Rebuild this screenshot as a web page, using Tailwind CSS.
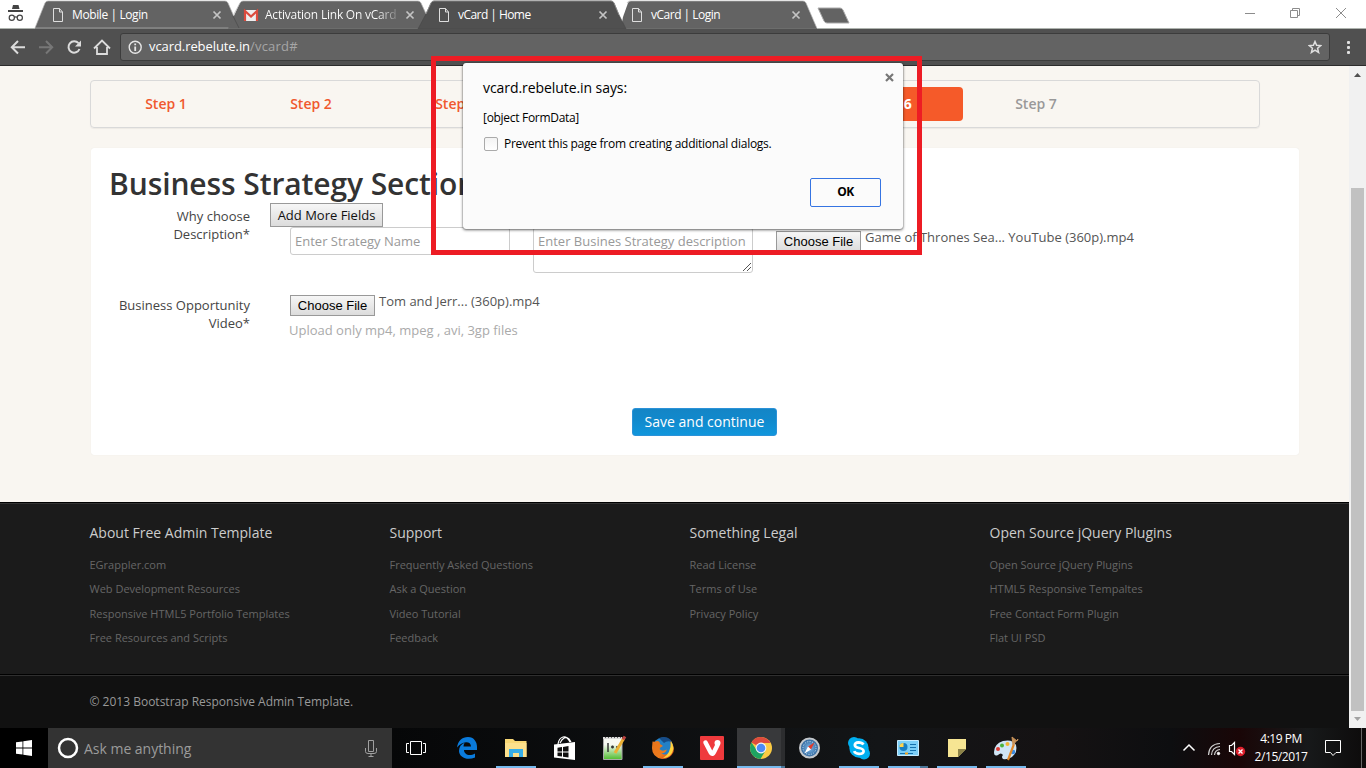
<!DOCTYPE html>
<html lang="en">
<head>
<meta charset="utf-8">
<title>vCard | Home</title>
<script src="https://cdn.jsdelivr.net/npm/@tailwindcss/browser@4"></script>
</head>
<body class="w-[1366px] h-[768px] overflow-hidden font-['Open_Sans',sans-serif] whitespace-nowrap">
<div class="relative flex flex-col w-[1366px] h-[768px] overflow-hidden">

  <!-- Tab strip -->
  <div class="relative h-[29px] shrink-0 bg-white">
    <svg class="absolute inset-0" width="1366" height="29" viewBox="0 0 1366 29">
      <path d="M0 28.5H1366" stroke="#aeb3ae"/>
      <path d="M35 28L45 3Q46 1 48 1H225Q227 1 228 3L239 28Z" fill="#636363" stroke="#b5b5b5" stroke-width=".7"/>
      <path d="M621 28.5L623 17L628 3Q629 1 631 1H803Q805 1 806 3L817 28.5Z" fill="#636363"/>
      <path d="M627 3Q628 1 630 1H803Q805 1 806 3L817 28.5" fill="none" stroke="#b5b5b5" stroke-width=".7"/>
      <path d="M228 28.5L240 3Q241 1 243 1H418Q420 1 421 3L433 28.5Z" fill="#636363"/>
      <path d="M233 16L239 28" stroke="#515151"/>
      <path d="M234 14L240 3Q241 1 243 1H418Q420 1 421 3L426 14" fill="none" stroke="#b5b5b5" stroke-width=".7"/>
      <path d="M35 28.5H817V29H35Z" fill="#515151"/>
      <path d="M418 29L426 14L431 3Q432 1 434 1H611Q613 1 614 3L619 15L626 29Z" fill="#505050" stroke="#494949" stroke-width=".7"/>
      <path d="M426 14L431 3Q432 1 434 1H611Q613 1 614 3L619 15" fill="none" stroke="#999" stroke-width=".7"/>
      <path d="M818 8H840Q842 8 843 10L849 23H827Q825 23 824 21Z" fill="#636363" stroke="#aaa"/>
      <g fill="#444"><path d="M12 9L13 5H18.500L19.500 9Z"/><path d="M8 10H23V12H8Z"/></g>
      <g fill="none" stroke="#444" stroke-width="1.200"><circle cx="11.800" cy="17.800" r="2.600"/><circle cx="19.800" cy="17.800" r="2.600"/><path d="M14.400 17.400Q15.800 16.300 17.200 17.400"/></g>
      <g fill="none" stroke="#dedede"><path id="doc" d="M53.500 8.500H59.500L62.500 12V21.500H53.500ZM59.500 8.500V12H62.500"/><use href="#doc" x="386"/><use href="#doc" x="579"/></g>
      <g fill="none" stroke="#c4c4c4" stroke-width="1.700"><path id="cx" d="M213.500 11.500L220.500 18.500M220.500 11.500L213.500 18.500"/><use href="#cx" x="193"/><use href="#cx" x="386"/><use href="#cx" x="579"/></g>
      <path d="M244 10H258V21H244Z" fill="#eee"/><path d="M245 21V11L251 16.500L257 11V21" fill="none" stroke="#dc4b3e" stroke-width="2.200"/>
      <g fill="none" stroke="#8c8c8c"><path d="M1245 13.500H1255M1290.500 10.500H1297.500V17.500H1290.500ZM1292.500 10V8.500H1299.500V15.500H1298M1336 8L1346 18M1346 8L1336 18"/></g>
    </svg>
    <div class="relative flex pl-[72px] text-[12px] leading-[29px] text-white">
      <div class="w-[193px] tracking-[-0.4px]">Mobile | Login</div>
      <div class="w-[193px]"><div class="w-[132px] overflow-hidden bg-gradient-to-r from-white from-85% to-white/20 bg-clip-text text-transparent tracking-[-0.22px]">Activation Link On vCard</div></div>
      <div class="w-[193px] tracking-[-0.55px]">vCard | Home</div>
      <div class="tracking-[-0.5px]">vCard | Login</div>
    </div>
  </div>

  <!-- Toolbar -->
  <div class="flex h-[37px] shrink-0 items-start bg-[#505050] border-b border-[#2c2c2c]">
    <svg width="120" height="36" viewBox="0 29 120 36" fill="none" stroke="#dcdcdc" stroke-width="2">
      <path d="M25 47.300H12M18 41L11.800 47.300L18 53.500"/>
      <path d="M39 47.300H52M46 41L52.200 47.300L46 53.500" stroke="#777"/>
      <path d="M78.500 43.200A5.700 5.700 0 1 0 79.500 49"/><path d="M81 40.500V46.500H75Z" fill="#dcdcdc" stroke="none"/>
      <path d="M94 48.500L102 40.500L110 48.500M97 47V54H107V47" stroke-width="1.800"/>
    </svg>
    <div class="mt-1 flex h-7 w-[1210px] items-center rounded-[3px] border border-[#3c3c3c] bg-[#636363] pl-[7px] pr-[7px]">
      <svg width="15" height="15" viewBox="0 0 15 15" fill="none" stroke="#e6e6e6" stroke-width="1.400"><circle cx="7.200" cy="7.200" r="6"/><path d="M7.200 6.500V11M7.200 3.500V5.200" stroke-width="1.800"/></svg>
      <div class="ml-[6px] grow text-[13px] tracking-[-0.08px] text-white">vcard.rebelute.in<span class="text-[#a6a6a6] tracking-[0.2px]">/vcard#</span></div>
      <svg width="14" height="14" viewBox="0 0 14 14" fill="none" stroke="#e0e0e0" stroke-width="1.500"><path d="M7 1.500L8.600 5.300L12.800 5.600L9.600 8.300L10.600 12.500L7 10.200L3.400 12.500L4.400 8.300L1.200 5.600L5.400 5.300Z"/></svg>
    </div>
    <svg class="ml-[16px] mt-3" width="5" height="14" fill="#e0e0e0"><rect x="1" y="0" width="3" height="3" rx="1"/><rect x="1" y="5" width="3" height="3" rx="1"/><rect x="1" y="10" width="3" height="3" rx="1"/></svg>
  </div>

  <!-- Page -->
  <div class="flex h-[662px] shrink-0">
    <div class="flex w-[1349px] flex-col bg-[#f9f6f1]">
      <div class="ml-[90px] mt-[14px] flex h-[48px] w-[1170px] items-center rounded-[4px] border border-[#d9d9d9] pl-[2px] text-center text-[14px] font-semibold leading-[34px] text-[#f0592e] shadow-[0_1px_1px_#0000000d]">
        <div class="w-[145px] pl-px">Step 1</div><div class="w-[145px] pl-px">Step 2</div><div class="w-[145px] pl-px">Step 3</div><div class="w-[145px]"></div><div class="w-[145px]"></div>
        <div class="w-[145px] rounded-[4px] bg-[#f55a29] font-bold text-white">Step 6</div>
        <div class="w-[145px] pl-px text-[#999]">Step 7</div>
      </div>

      <div class="ml-[91px] mt-[20px] flex h-[307px] w-[1208px] flex-col rounded-[3px] bg-white text-[13px] leading-[18px] text-[#555] shadow-[0_0_1px_#0000001a]">
        <h2 class="ml-[18px] mt-[17px] h-[38px] text-[30px] font-semibold leading-[38px] tracking-[-0.1px] text-[#333]">Business Strategy Section</h2>
        <div class="flex h-[91px]">
          <div class="w-[159px] pt-[4px] text-right text-[#444]">Why choose<br>Description*</div>
          <div class="ml-[20px] flex flex-col items-start">
            <div class="flex h-6 w-[113px] items-center justify-center border border-[#999] bg-gradient-to-b from-[#f6f6f6] to-[#dcdcdc] text-[#111]">Add More Fields</div>
            <div class="ml-[20px] flex items-start">
              <div class="h-7 w-[220px] rounded-[3px] border border-[#ccc] px-[4px] leading-[26px] text-[#999]">Enter Strategy Name</div>
              <div class="relative ml-[23px] h-[46px] w-[220px] rounded-[3px] border border-[#ccc] px-[4px] leading-[26px] text-[#999]">Enter Busines Strategy description
                <svg class="absolute bottom-0 right-0" width="10" height="10" stroke="#555" fill="none"><path d="M1 9L9 1M5 9L9 5"/></svg></div>
              <div class="ml-[23px] mt-[4px] flex h-[21px] w-[85px] items-center justify-center border border-[#999] bg-gradient-to-b from-[#f6f6f6] to-[#dcdcdc] font-['Liberation_Sans',sans-serif] text-[13px] text-black">Choose File</div>
              <div class="ml-[4px] mt-[1px]">Game of Thrones Sea... YouTube (360p).mp4</div>
            </div>
          </div>
        </div>
        <div class="flex h-[114px] pt-[1px]">
          <div class="w-[159px] pt-[1px] text-right text-[#444]">Business Opportunity<br>Video*</div>
          <div class="ml-[40px]">
            <div class="flex items-start">
              <div class="flex h-[21px] w-[85px] items-center justify-center border border-[#999] bg-gradient-to-b from-[#f6f6f6] to-[#dcdcdc] font-['Liberation_Sans',sans-serif] text-[13px] text-black">Choose File</div>
              <div class="ml-[4px] -mt-[3px]">Tom and Jerr... (360p).mp4</div>
            </div>
            <div class="-ml-px mt-[5px] text-[#aaa]">Upload only mp4, mpeg , avi, 3gp files</div>
          </div>
        </div>
        <div class="ml-[541px] flex h-7 w-[145px] items-center justify-center rounded-[3px] border border-[#2b92d8] bg-gradient-to-b from-[#1485c6] via-[#1189cc] via-40% to-[#1096dc] text-[14px] text-white">Save and continue</div>
      </div>

      <!-- Footer -->
      <div class="mt-[47px] flex h-[172px] shrink-0 border-t border-black bg-[#1b1b1b] pl-[89.5px] pt-[20px] text-[11px] leading-[24.4px] text-[#666] shadow-[inset_0_1px_0_#333]">
        <div class="w-[300px]"><div class="mb-[10px] text-[14px] leading-5 text-[#ccc]">About Free Admin Template</div>EGrappler.com<br>Web Development Resources<br>Responsive HTML5 Portfolio Templates<br>Free Resources and Scripts</div>
        <div class="w-[300px]"><div class="mb-[10px] text-[14px] leading-5 text-[#ccc]">Support</div>Frequently Asked Questions<br>Ask a Question<br>Video Tutorial<br>Feedback</div>
        <div class="w-[300px]"><div class="mb-[10px] text-[14px] leading-5 text-[#ccc]">Something Legal</div>Read License<br>Terms of Use<br>Privacy Policy</div>
        <div><div class="mb-[10px] text-[14px] leading-5 text-[#ccc]">Open Source jQuery Plugins</div>Open Source jQuery Plugins<br>HTML5 Responsive Tempaltes<br>Free Contact Form Plugin<br>Flat UI PSD</div>
      </div>
      <div class="h-[54px] shrink-0 border-t border-black bg-[#111] pl-[89.5px] pt-[17px] text-[12px] leading-[20px] text-[#999] shadow-[inset_0_1px_0_#2f2f2f]">© 2013 Bootstrap Responsive Admin Template.</div>
    </div>
    <!-- Scrollbar -->
    <div class="flex w-[17px] flex-col items-center bg-[#f1f1f1]">
      <svg width="17" height="122"><path d="M5 11L8.500 7L12 11Z" fill="#505050"/></svg>
      <div class="h-[523px] w-[13px] bg-[#c1c1c1]"></div>
      <svg width="17" height="17"><path d="M5 6L8.500 10L12 6Z" fill="#a3a3a3"/></svg>
    </div>
  </div>

  <!-- Taskbar -->
  <div class="flex h-10 shrink-0 bg-[#060708] font-['Open_Sans',sans-serif]">
    <div class="flex w-12 items-center justify-center bg-black"><svg width="16" height="16" fill="#fff"><path d="M0 2.300L6.500 1.400V7.600H0ZM7.300 1.300L16 0V7.600H7.300ZM0 8.400H6.500V14.600L0 13.700ZM7.300 8.400H16V16L7.300 14.700Z"/></svg></div>
    <div class="flex w-[344px] items-center bg-[#333] pl-[9px]">
      <svg width="22" height="22" fill="none"><circle cx="11" cy="11" r="9" stroke="#fff" stroke-width="2.500"/></svg>
      <div class="ml-[5px] w-[281px] text-[14px] tracking-[-0.02px] text-[#9b9b9b]">Ask me anything</div>
      <svg width="12" height="17" fill="none" stroke="#a0a0a0"><path d="M3.500 .5H8.500V11.500H3.500ZM.5 8V11.500Q.5 13.500 3 13.500H9Q11.500 13.500 11.500 11.500V8M6 13.500V16M3.500 16.500H8.500"/></svg>
    </div>
    <svg width="974" height="40" viewBox="392 728 974 40">
      <defs>
        <linearGradient id="bg" x2="1" y2="0"><stop offset="0" stop-color="#060708"/><stop offset=".5" stop-color="#131517"/><stop offset=".68" stop-color="#151213"/><stop offset=".8" stop-color="#0d0e10"/><stop offset=".87" stop-color="#190607"/><stop offset=".94" stop-color="#17191a"/><stop offset="1" stop-color="#0d0b0b"/></linearGradient>
        <linearGradient id="grn" x2="0" y2="1"><stop offset=".3" stop-color="#f6f8f2"/><stop offset="1" stop-color="#4fbd2f"/></linearGradient>
        <linearGradient id="fox" x2="1" y2="1"><stop stop-color="#e8741a"/><stop offset=".6" stop-color="#ee7a1c"/><stop offset="1" stop-color="#c3321b"/></linearGradient>
        <radialGradient id="saf"><stop stop-color="#7db7e8"/><stop offset="1" stop-color="#2e6398"/></radialGradient>
      </defs>
      <path d="M392 728H1366V768H392Z" fill="url(#bg)"/>
      <path d="M737 728H781V768H737Z" fill="#38393b"/><path d="M781 728H785V768H781Z" fill="#2c2d2f"/>
      <path d="M496 766H536V768H496ZM643 766H683V768H643ZM737 766H781V768H737ZM839 766H879V768H839ZM888 766H920V768H888ZM937 766H977V768H937ZM986 766H1026V768H986Z" fill="#76b9ed"/><path d="M781 766H785V768H781ZM920 766H928V768H920Z" fill="#4a7698"/>
      <!-- Task view -->
      <path d="M410.500 741.500H421.500V754.500H410.500ZM409 743.500H406.500V752.500H409M423 743.500H425.500V752.500H423" fill="none" stroke="#fff"/>
      <!-- Edge -->
      <path d="M457 747.500C458 741 462 737 468 737C474 737 477 742 477 747V750H464C464 754 469 757 475 753.500V757.500C467 761 459 757 459 751C459 747 461 744 465 742.500C464 743.500 463.700 745 463.500 746.500H471C471 741 463 740.500 457 747.500Z" fill="#0a7bdc"/>
      <!-- Explorer -->
      <path d="M505 739H513L515 741H526.500V757H505Z" fill="#f8d775"/><path d="M505 743H526.500V757H505Z" fill="#fce08c"/><path d="M509 749H523V757H519V753H513V757H509Z" fill="#36aee8"/>
      <!-- Store -->
      <path d="M554 744.500L575 742V760L554 757.500Z" fill="#fff"/><path d="M558 744Q559 738 563 737T570 742M560 743Q564 735 569 739L571 742" fill="none" stroke="#fff" stroke-width="1.200"/><path d="M557.500 747.700L562 747V751.500H557.500ZM563 746.900L568.500 746V751.500H563ZM557.500 752.500H562V756.500L557.500 756ZM563 752.500H568.500V757.500L563 756.700Z" fill="#111"/>
      <!-- Notepad++ -->
      <path d="M603.500 738H622V759.500H603.500Z" fill="url(#grn)" stroke="#aaa"/><path d="M603 738H622" stroke="#ddd" stroke-width="2" stroke-dasharray="2 1"/><path d="M608 743V752M611 747H614M612.500 745.500V748.500M616 747H619" stroke="#333" stroke-width="1.500"/><path d="M624 738L615 753" stroke="#ebb033" stroke-width="3"/><path d="M625 736.500L623 739.500" stroke="#b44" stroke-width="3"/>
      <!-- Firefox -->
      <circle cx="663" cy="748" r="10.500" fill="#2380c6"/><path d="M659 738Q668 735 672 742Q667 740 664 743Z" fill="#174d88"/><path d="M652.500 741.500Q655 742 657 741Q660 741 660 744L663 746Q660 747 659.500 749Q662 752 667 749.500Q665 754 661 753Q666 756.500 669.500 752Q672 747 670 741Q675 746 673.500 752Q670 759.500 662 759Q652 757 652 748Z" fill="url(#fox)"/><path d="M671 741Q675 748 672 753Q669 758 663 758Q671 754 671 741Z" fill="#ffd33b"/>
      <!-- Vivaldi -->
      <rect x="700" y="736" width="24" height="24" rx="1" fill="#ef3a3d"/><path d="M705.500 742.500L711 753Q712.500 755 714 752L717.500 745" fill="none" stroke="#fff" stroke-width="4.500" stroke-linecap="round" stroke-linejoin="round"/><circle cx="717.500" cy="743" r="3" fill="#fff"/>
      <!-- Chrome -->
      <circle cx="761" cy="748" r="11" fill="#fbcb43"/><path d="M761 748L751.500 742.500A11 11 0 0 1 770.700 743H761Z" fill="#de4b3d"/><path d="M751.500 742.500A11 11 0 0 0 760.500 759L765.500 750.500H757Z" fill="#1ea362"/><circle cx="761" cy="748" r="5.400" fill="#f5f5f5"/><circle cx="761" cy="748" r="4.300" fill="#4c8bf5"/>
      <!-- Safari -->
      <circle cx="809.500" cy="748" r="9.500" fill="url(#saf)" stroke="#c4c8cc" stroke-width="2"/><circle cx="809.500" cy="748" r="6.500" fill="none" stroke="#c8e3f6" stroke-dasharray="1 1.500"/><path d="M814.500 742.500L811 749.500L808 746.500Z" fill="#e13b2d"/><path d="M804.500 753.500L808 746.500L811 749.500Z" fill="#fff"/>
      <!-- Skype -->
      <circle cx="859" cy="748" r="9.700" fill="#00aff0"/><circle cx="854" cy="743" r="6" fill="#00aff0"/><circle cx="864" cy="753.500" r="6" fill="#00aff0"/><path d="M863.500 744.500Q862 742.300 858.500 742.300Q854.800 742.500 854.800 745Q854.800 747.300 859 748Q863.600 748.800 863.600 751.200Q863.500 753.800 859 753.800Q855 753.700 854.200 751.200" fill="none" stroke="#fff" stroke-width="2.700"/>
      <!-- Control panel -->
      <path d="M897.500 740.500H918.500V755.500H897.500Z" fill="#7bcff8" stroke="#c7ecff"/><circle cx="903.500" cy="747" r="4" fill="#187fc4"/><path d="M903.500 747V743A4 4 0 0 0 899.500 747Z" fill="#ffd34d"/><path d="M910 744.500H916M910 747.500H916M910 750.500H916M900 753.500H913" stroke="#1572ae"/><path d="M905 753.500H908" stroke="#f7a51d" stroke-width="2"/>
      <!-- Sticky notes -->
      <path d="M948 739H966V749L958 757H948Z" fill="#f6e593"/><path d="M958 757V749H966Z" fill="#8c8348"/>
      <!-- Paint -->
      <path d="M994 752Q994 744 1003 741Q1013 739 1016 745Q1018 752 1012 757Q1007 760 1003 759Q1001 757 1003 755Q1001 752 998 755Q994 757 994 752Z" fill="#cfe5f5"/><circle cx="998" cy="749" r="2" fill="#dc3c35"/><circle cx="1002" cy="745.500" r="2" fill="#4ab33c"/><circle cx="1007.500" cy="744" r="2" fill="#f2b533"/><circle cx="1013" cy="752" r="2.300" fill="#3b8be0"/><path d="M1008 760L1014 744" stroke="#e2892b" stroke-width="2.200"/><path d="M1013 745L1012 737L1017 741L1018 739Z" fill="#c89259" stroke="#c89259"/>
      <!-- Tray -->
      <g fill="none" stroke="#fff"><path d="M1183.500 750.500L1189 745L1194.500 750.500" stroke-width="1.500"/>
      <path d="M1208.500 755Q1209 744 1220 743.500M1211.500 755Q1212 747 1220 746.500M1214.500 755Q1215 750 1220 749.500" stroke="#d0d0d0" stroke-width="1.200"/><circle cx="1218.500" cy="753.500" r="1.200" fill="#fff"/>
      <path d="M1229.500 745.500H1231.500L1234.500 742.500V754.500L1231.500 751.500H1229.500Z" stroke-width="1.200"/><path d="M1325.500 740.500H1340.500V752.500H1336L1333 755.500L1330.500 752.500H1325.500Z"/></g>
      <circle cx="1240.500" cy="751.500" r="4.700" fill="#dd1f2b"/><path d="M1238.500 749.500L1242.500 753.500M1242.500 749.500L1238.500 753.500" stroke="#fff" stroke-width="1.300"/>
      <path d="M1361.500 728V768" stroke="#666"/>
    </svg>
    <div class="absolute left-[1250px] top-[730px] w-[62px] text-center text-[12px] leading-[18px] tracking-[-0.5px] text-white">4:19 PM<br><span class="-mx-2 tracking-[-0.45px]">2/15/2017</span></div>
  </div>

  <!-- Alert dialog -->
  <div class="absolute left-[463px] top-[63px] flex h-[166px] w-[440px] flex-col rounded-[3px] bg-[#fbfbfb] pl-[20px] text-[12px] text-black shadow-[0_1px_3px_#00000099,0_0_1px_#00000099]">
    <div class="flex h-[47px]">
      <div class="mt-[15px] w-[401px] text-[14px] leading-[20px] tracking-[-0.07px]">vcard.rebelute.in says:</div>
      <svg class="mt-[9.500px] ml-[.5px]" width="9" height="9" stroke="#777" stroke-width="2.200"><path d="M1 1L8 8M8 1L1 8"/></svg>
    </div>
    <div class="leading-[16px] tracking-[-0.3px]">[object FormData]</div>
    <div class="mt-[10px] flex items-center leading-[16px]">
      <div class="ml-[1px] size-[14px] rounded-[2px] border border-[#aaa] bg-gradient-to-b from-[#f3f3f3] to-white"></div>
      <div class="ml-[6px] tracking-[-0.26px]">Prevent this page from creating additional dialogs.</div>
    </div>
    <div class="ml-[327px] mt-[26px] flex h-[29px] w-[71px] items-center justify-center rounded-[2px] border border-[#3574e2] pb-px font-bold tracking-[-0.5px]">OK</div>
  </div>
  <!-- Highlight frame -->
  <div class="absolute left-[431px] top-[56px] h-[199px] w-[491px] border-[5px] border-[#ed1c24]"></div>
</div>
</body>
</html>
